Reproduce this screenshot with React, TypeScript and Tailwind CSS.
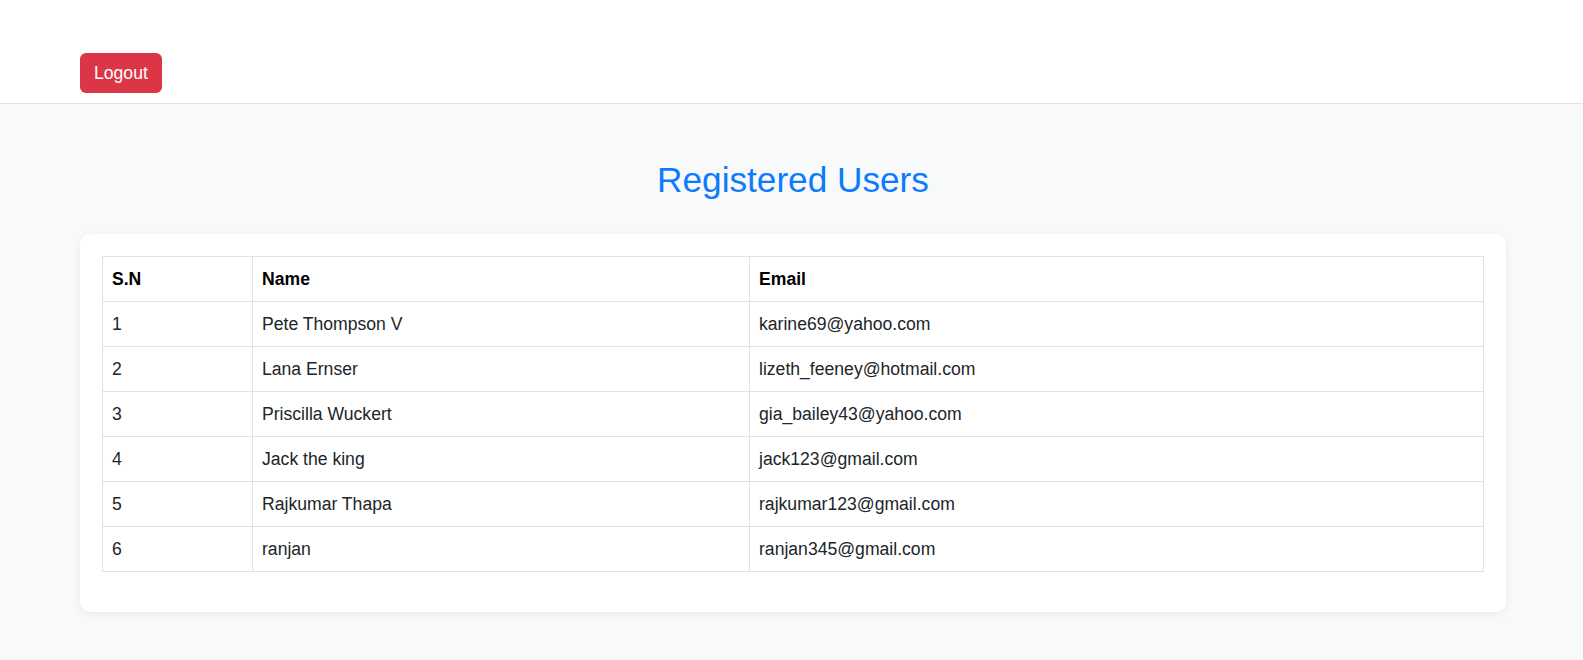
const users = [
  { name: 'Pete Thompson V', email: 'karine69@yahoo.com' },
  { name: 'Lana Ernser', email: 'lizeth_feeney@hotmail.com' },
  { name: 'Priscilla Wuckert', email: 'gia_bailey43@yahoo.com' },
  { name: 'Jack the king', email: 'jack123@gmail.com' },
  { name: 'Rajkumar Thapa', email: 'rajkumar123@gmail.com' },
  { name: 'ranjan', email: 'ranjan345@gmail.com' },
];

export default function App() {
  return (
    <div className="min-h-screen bg-[#f8f9fa] font-['Liberation_Sans',Arial,sans-serif] text-[17.6px] text-[#212529]">
      {/* Top bar */}
      <header className="bg-white border-b border-[#dee2e6] pl-[80px] pt-[53px] pb-[10px]">
        <button className="rounded-[6px] bg-[#dc3545] px-[14px] py-[7px] leading-[26px] text-white">
          Logout
        </button>
      </header>

      <main className="pl-[80px] pr-[77px] pt-[54px] pb-10">
        <h1 className="mb-[33px] text-center text-[35.2px] leading-[43px] text-[#0d7bfd]">
          Registered Users
        </h1>

        <div className="rounded-[10px] bg-white px-[22px] pt-[22px] pb-[40px] shadow-[0_2px_8px_rgba(0,0,0,0.06)]">
          <table className="w-full table-fixed border-collapse">
            <thead>
              <tr>
                <th className="w-[150px] border border-[#dee2e6] px-[9px] py-[9px] text-left font-bold leading-[26px] text-black">S.N</th>
                <th className="w-[497px] border border-[#dee2e6] px-[9px] py-[9px] text-left font-bold leading-[26px] text-black">Name</th>
                <th className="border border-[#dee2e6] px-[9px] py-[9px] text-left font-bold leading-[26px] text-black">Email</th>
              </tr>
            </thead>
            <tbody>
              {users.map((u, i) => (
                <tr key={u.email}>
                  <td className="border border-[#dee2e6] px-[9px] py-[9px] leading-[26px]">{i + 1}</td>
                  <td className="border border-[#dee2e6] px-[9px] py-[9px] leading-[26px]">{u.name}</td>
                  <td className="border border-[#dee2e6] px-[9px] py-[9px] leading-[26px]">{u.email}</td>
                </tr>
              ))}
            </tbody>
          </table>
        </div>
      </main>
    </div>
  );
}
